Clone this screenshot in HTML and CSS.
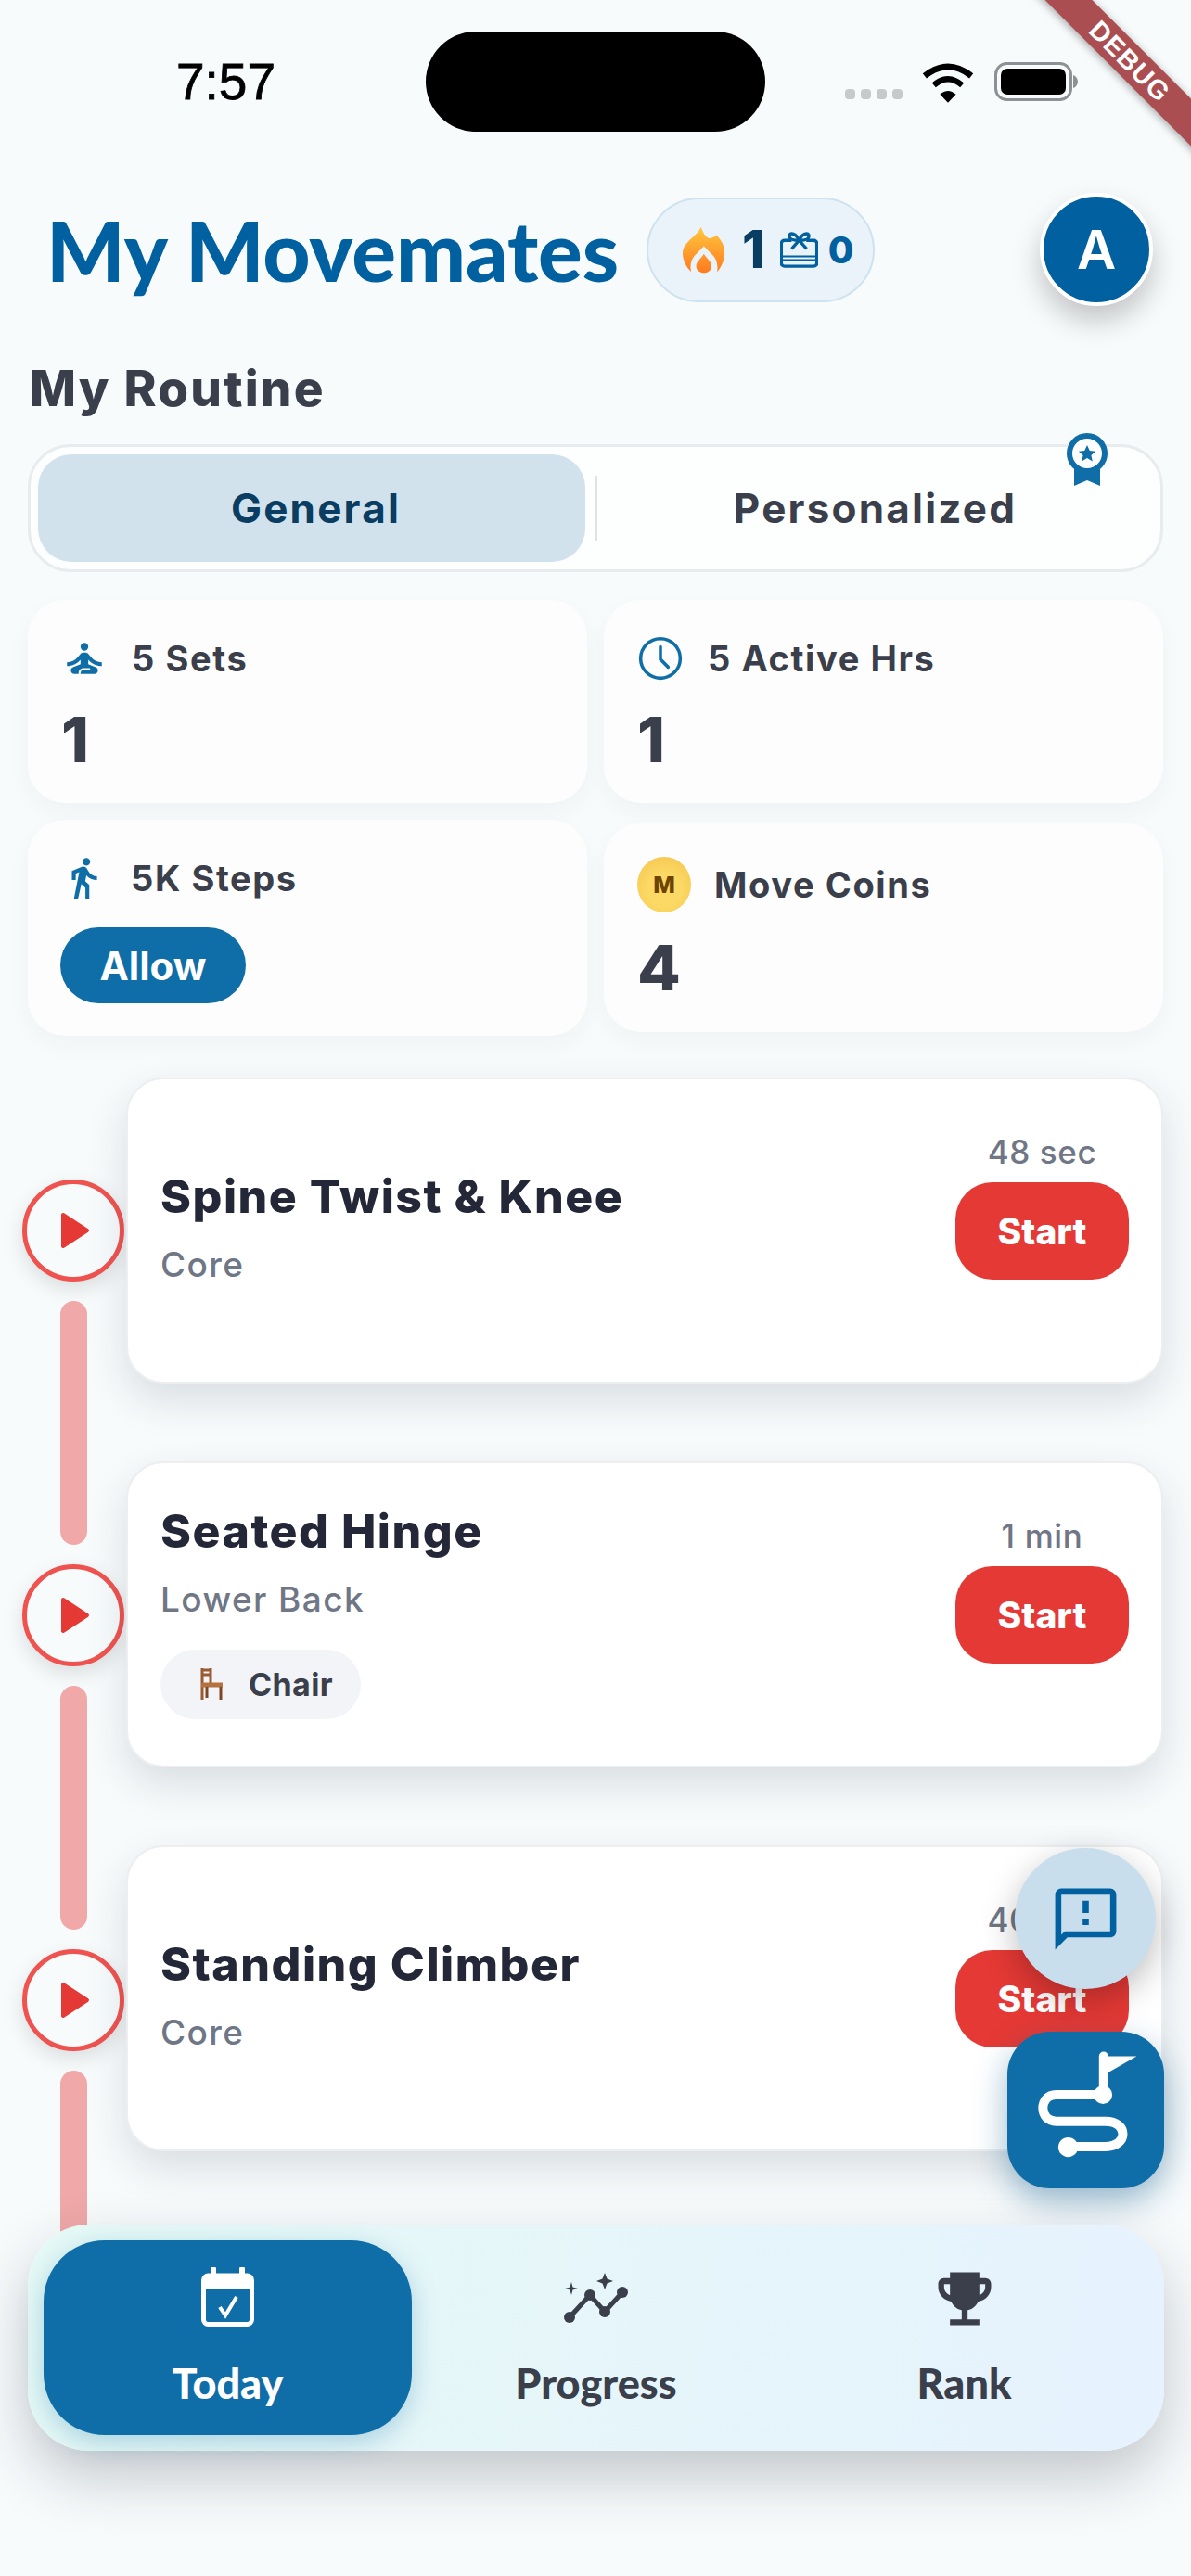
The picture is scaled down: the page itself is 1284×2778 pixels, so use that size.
FILE: index.html
```html
<!DOCTYPE html>
<html lang="en">
<head>
    <meta charset="UTF-8">
    <meta name="viewport" content="width=device-width, initial-scale=1.0">
    <title>My Movemates</title>
    <link rel="stylesheet" href="styles.css">
</head>
<body>
<div class="screen">
    <div class="status-bar">
        <div class="clock">7:57</div>
        <div class="island"></div>
        <div class="status-icons">
            <div class="signal"><span></span><span></span><span></span><span></span></div>
            <svg class="wifi" viewBox="350 190 168 136"><path d="M434 325L408 298Q434 275 460 298Z" fill="#000"/><path d="M388 268Q434 228 480 268" fill="none" stroke="#000" stroke-width="19"/><path d="M358 238Q434 178 510 238" fill="none" stroke="#000" stroke-width="20"/></svg>
            <svg class="battery" viewBox="0 0 91 42"><rect x="1.5" y="1.5" width="81" height="39" rx="12" fill="none" stroke="#8e9193" stroke-width="3"/><rect x="7" y="7" width="70" height="28" rx="7" fill="#000"/><path d="M85 14c3 1 5 4 5 7s-2 6-5 7z" fill="#8e9193"/></svg>
        </div>
    </div>

    <header class="app-header">
        <h1 class="app-title">My Movemates</h1>
        <div class="streak-badge">
            <svg class="flame" viewBox="160 150 140 157">
                <defs><linearGradient id="flameFill" gradientUnits="userSpaceOnUse" x1="0" y1="155" x2="0" y2="305"><stop offset="0" stop-color="#ffc83f"/><stop offset="1" stop-color="#ff7a1f"/></linearGradient></defs>
                <path fill="url(#flameFill)" d="M222 155C228 175 240 195 252 192C262 190 268 186 272 182C290 200 300 220 298 245C297 265 288 285 274 302C278 280 272 262 262 250L231 218L200 250C190 262 184 282 190 302C172 285 162 262 162 240C162 205 205 190 222 155Z"/>
                <path fill="url(#flameFill)" d="M231 243C240 258 256 268 256 283C256 296 244 305 231 305C218 305 206 296 206 283C206 268 222 258 231 243Z"/>
            </svg>
            <span class="streak-count">1</span>
            <svg class="gift" viewBox="488 175 122 118" fill="none" stroke="#0060a0" stroke-width="10">
                <path d="M525 205H502a10 10 0 0 0-10 10v63a10 10 0 0 0 10 10h94a10 10 0 0 0 10-10v-63a10 10 0 0 0-10-10H572"/>
                <path d="M525 232L549 205L573 232"/>
                <path d="M549 205C535 175 510 180 520 198C524 204 540 205 549 205C563 175 588 180 578 198C574 204 558 205 549 205"/>
                <path d="M492 256H606M492 268H606" stroke-width="6"/>
            </svg>
            <span class="gift-count">0</span>
        </div>
        <div class="avatar">A</div>
    </header>

    <main class="content">
        <h2 class="section-title">My Routine</h2>

        <div class="segment">
            <div class="segment-tab selected">General</div>
            <div class="segment-divider"></div>
            <div class="segment-tab">Personalized</div>
            <svg class="medal" viewBox="0 0 44 57">
                <path d="M8 32V57L22 51L36 57V32Z" fill="#0f6ea8"/>
                <circle cx="22" cy="22" r="19" fill="#fff" stroke="#0f6ea8" stroke-width="6"/>
                <path d="M22 13l2.8 6 6.4.7-4.8 4.3 1.4 6.4-5.8-3.3-5.8 3.3 1.4-6.4-4.8-4.3 6.4-.7z" fill="#0f6ea8"/>
            </svg>
        </div>

        <div class="stats">
            <div class="stat-card">
                <div class="stat-head">
                    <svg class="stat-icon" viewBox="0 0 24 24" fill="#0f6ea8"><circle cx="12" cy="6" r="2"/><path d="M21 16v-2c-2.24 0-4.16-.96-5.6-2.68l-1.34-1.6c-.38-.46-.94-.72-1.53-.72h-1.05c-.59 0-1.15.26-1.53.72l-1.34 1.6C7.16 13.04 5.24 14 3 14v2c2.77 0 5.19-1.17 7-3.25V15l-3.88 1.55c-.67.27-1.12.93-1.12 1.66C5 19.2 5.8 20 6.79 20H9v-.5c0-1.38 1.12-2.5 2.5-2.5h3c.28 0 .5.22.5.5s-.22.5-.5.5h-3c-.83 0-1.5.67-1.5 1.5v.5h7.21c.99 0 1.79-.8 1.79-1.79 0-.73-.45-1.39-1.12-1.66L14 15v-2.25c1.81 2.08 4.23 3.25 7 3.25z"/></svg>
                    <span class="stat-label">5 Sets</span>
                </div>
                <div class="stat-value">1</div>
            </div>
            <div class="stat-card">
                <div class="stat-head">
                    <svg class="stat-icon" viewBox="0 0 48 48" fill="none" stroke="#0f6ea8" stroke-width="3.4" stroke-linecap="round"><circle cx="24" cy="24" r="20.5"/><path d="M24 12v13l8 8"/></svg>
                    <span class="stat-label">5 Active Hrs</span>
                </div>
                <div class="stat-value">1</div>
            </div>
            <div class="stat-card">
                <div class="stat-head">
                    <svg class="stat-icon" viewBox="0 0 24 24" fill="#0f6ea8"><path d="M13.5 5.5c1.1 0 2-.9 2-2s-.9-2-2-2-2 .9-2 2 .9 2 2 2zM9.8 8.9L7 23h2.1l1.8-8 2.1 2v6h2v-7.5l-2.1-2 .6-3C14.8 12 16.8 13 19 13v-2c-1.9 0-3.5-1-4.3-2.4l-1-1.6c-.4-.6-1-1-1.7-1-.3 0-.5.1-.8.1L6 8.3V13h2V9.6l1.8-.7"/></svg>
                    <span class="stat-label">5K Steps</span>
                </div>
                <button class="allow-button">Allow</button>
            </div>
            <div class="stat-card coins">
                <div class="stat-head">
                    <div class="coin">M</div>
                    <span class="stat-label">Move Coins</span>
                </div>
                <div class="stat-value">4</div>
            </div>
        </div>

        <section class="routine">
            <div class="timeline">
                <div class="play-node"><svg class="play-arrow" viewBox="0 0 32 40"><path d="M3 3L29 20L3 37Z" fill="#e53935" stroke="#e53935" stroke-width="4" stroke-linejoin="round"/></svg></div>
                <div class="timeline-bar"></div>
                <div class="play-node"><svg class="play-arrow" viewBox="0 0 32 40"><path d="M3 3L29 20L3 37Z" fill="#e53935" stroke="#e53935" stroke-width="4" stroke-linejoin="round"/></svg></div>
                <div class="timeline-bar"></div>
                <div class="play-node"><svg class="play-arrow" viewBox="0 0 32 40"><path d="M3 3L29 20L3 37Z" fill="#e53935" stroke="#e53935" stroke-width="4" stroke-linejoin="round"/></svg></div>
                <div class="timeline-bar"></div>
            </div>
            <div class="exercises">
                <div class="exercise-card">
                    <div class="exercise-info">
                        <div class="exercise-name">Spine Twist &amp; Knee</div>
                        <div class="exercise-area">Core</div>
                    </div>
                    <div class="exercise-action">
                        <div class="exercise-time">48 sec</div>
                        <button class="start-button">Start</button>
                    </div>
                </div>
                <div class="exercise-card">
                    <div class="exercise-info">
                        <div class="exercise-name">Seated Hinge</div>
                        <div class="exercise-area">Lower Back</div>
                        <div class="equipment-chip">
                            <svg class="chair" viewBox="0 0 28 36" fill="none" stroke="#9a5b32" stroke-width="3"><path d="M4 1V35M13 1V18M4 3H13M4 8H13" /><path d="M3 19H26" stroke="#b5713f" stroke-width="5"/><path d="M9 21V33M24 21V35" stroke="#7d4726"/></svg>
                            <span>Chair</span>
                        </div>
                    </div>
                    <div class="exercise-action">
                        <div class="exercise-time">1 min</div>
                        <button class="start-button">Start</button>
                    </div>
                </div>
                <div class="exercise-card">
                    <div class="exercise-info">
                        <div class="exercise-name">Standing Climber</div>
                        <div class="exercise-area">Core</div>
                    </div>
                    <div class="exercise-action">
                        <div class="exercise-time">40 sec</div>
                        <button class="start-button">Start</button>
                    </div>
                </div>
            </div>
        </section>
    </main>

    <button class="fab-feedback">
        <svg viewBox="0 0 24 24" fill="#0060a0"><path d="M20 2H4c-1.1 0-2 .9-2 2v18l4-4h14c1.1 0 2-.9 2-2V4c0-1.1-.9-2-2-2zm0 14H5.17L4 17.17V4h16v12zM11 12h2v2h-2zm0-6h2v4h-2z"/></svg>
    </button>
    <button class="fab-route">
        <svg viewBox="137 693 508 507">
            <path d="M449 772V897H295C238 897 238 983 295 983H455C530 983 530 1065 455 1065H335" fill="none" stroke="#fff" stroke-width="30" stroke-linecap="round"/>
            <path d="M460 772L556 772L460 827Z" fill="#fff"/>
            <circle cx="447" cy="897" r="30" fill="#fff"/>
            <circle cx="334" cy="1067" r="32" fill="#fff"/>
        </svg>
    </button>

    <nav class="bottom-nav">
        <div class="nav-item active">
            <svg class="nav-icon" viewBox="0 0 57 64"><path d="M13 2V12M44 2V12" stroke="#fff" stroke-width="6" stroke-linecap="round"/><rect x="2.5" y="9" width="52" height="52.500" rx="5" fill="none" stroke="#fff" stroke-width="5"/><rect x="2.5" y="9" width="52" height="14" fill="#fff"/><path d="M20 43L26 52L38 32" fill="none" stroke="#fff" stroke-width="4"/></svg>
            <span class="nav-label">Today</span>
        </div>
        <div class="nav-item">
            <svg class="nav-icon progress" viewBox="0 0 70 54" fill="#3a3f4b"><path d="M6 48L28 24L44 42L63 21" fill="none" stroke="#3a3f4b" stroke-width="5"/><circle cx="6" cy="48" r="6"/><circle cx="28" cy="24" r="6"/><circle cx="44" cy="42" r="6"/><circle cx="63" cy="21" r="6"/><path d="M44 0L46.5 6.5L53 9L46.5 11.5L44 18L41.500 11.500L35 9L41.500 6.500Z"/><path d="M8 10L9.500 15.500L15 17L9.500 18.500L8 24L6.500 18.500L1 17L6.500 15.500Z"/></svg>
            <span class="nav-label">Progress</span>
        </div>
        <div class="nav-item">
            <svg class="nav-icon trophy" viewBox="0 0 24 24" fill="#3a3f4b"><path d="M19 5h-2V3H7v2H5c-1.100 0-2 .9-2 2v1c0 2.550 1.920 4.630 4.390 4.940.63 1.500 1.980 2.630 3.610 2.960V19H7v2h10v-2h-4v-3.100c1.630-.33 2.980-1.460 3.610-2.960C19.080 12.630 21 10.550 21 8V7c0-1.100-.9-2-2-2zM5 8V7h2v3.820C5.840 10.400 5 9.300 5 8zm14 0c0 1.300-.84 2.400-2 2.820V7h2v1z"/></svg>
            <span class="nav-label">Rank</span>
        </div>
    </nav>

    <div class="debug-banner">DEBUG</div>
</div>
</body>
</html>
```

FILE: styles.css
```css
* {
    box-sizing: border-box;
}
body {
    margin: 0;
    font-family: "Inter", "Liberation Sans", sans-serif;
    background-color: #f8fbfc;
}
button {
    border: none;
    font-family: inherit;
    padding: 0;
}
.screen {
    position: relative;
    width: 1284px;
    height: 2778px;
    overflow: hidden;
    background-color: #f8fbfc;
}

/* status bar */
.status-bar {
    display: flex;
    align-items: center;
    height: 176px;
}
.clock {
    width: 459px;
    padding-left: 190px;
    font-family: "Liberation Sans", sans-serif;
    font-size: 55px;
    color: #000;
    -webkit-text-stroke: 0.8px #000;
}
.island {
    width: 366px;
    height: 108px;
    background-color: #000;
    border-radius: 54px;
}
.status-icons {
    display: flex;
    align-items: center;
    margin-left: 86px;
}
.signal {
    display: flex;
    gap: 6px;
    margin-top: 26px;
    margin-right: 21px;
}
.signal span {
    width: 11px;
    height: 11px;
    border-radius: 4px;
    background-color: #c6cacb;
}
.wifi {
    width: 56px;
    height: 45px;
    margin-right: 22px;
}
.battery {
    width: 91px;
    height: 42px;
}

/* header */
.app-header {
    display: flex;
    align-items: center;
    height: 186px;
    padding-left: 50px;
}
.app-title {
    margin: 0;
    width: 647px;
    font-family: "Lato", sans-serif;
    font-weight: 900;
    font-size: 89px;
    color: #0060a0;
    white-space: nowrap;
}
.streak-badge {
    display: flex;
    align-items: center;
    width: 246px;
    height: 113px;
    padding-left: 36px;
    background-color: #eaf3f9;
    border: 2px solid #cfe2ef;
    border-radius: 57px;
}
.flame {
    width: 47px;
    height: 52px;
}
.streak-count {
    margin-left: 18px;
    font-size: 56px;
    font-weight: 800;
    color: #0a3d62;
}
.gift {
    width: 41px;
    height: 40px;
    margin-left: 16px;
}
.gift-count {
    margin-left: 11px;
    font-size: 40px;
    font-weight: 800;
    color: #0060a0;
}
.avatar {
    display: flex;
    align-items: center;
    justify-content: center;
    width: 122px;
    height: 122px;
    margin-left: 178px;
    border: 4px solid #fff;
    border-radius: 50%;
    background-color: #0060a0;
    color: #fff;
    font-size: 58px;
    font-weight: 600;
    box-shadow: 0 16px 30px rgba(0,0,0,0.22);
}

/* routine */
.section-title {
    margin: 0 0 35px 32px;
    padding-top: 32px;
    line-height: 50px;
    font-size: 53px;
    font-weight: 800;
    letter-spacing: 2.2px;
    color: #3a3f4b;
}
.segment {
    position: relative;
    display: flex;
    align-items: center;
    width: 1224px;
    height: 138px;
    margin-left: 30px;
    padding: 0 8px;
    background-color: #fdfefe;
    border: 3px solid #e8ecee;
    border-radius: 46px;
}
.segment-tab {
    flex: 1;
    display: flex;
    align-items: center;
    justify-content: center;
    height: 116px;
    font-size: 44px;
    font-weight: 700;
    letter-spacing: 2.2px;
    color: #3a3f4b;
    border-radius: 36px;
}
.segment-tab.selected {
    flex: none;
    width: 590px;
    padding-left: 9px;
    background-color: #d1e2ed;
    color: #0a3d62;
}
.segment-divider {
    width: 2px;
    height: 70px;
    margin-left: 11px;
    background-color: #dfe3e5;
}
.medal {
    position: absolute;
    top: -15px;
    right: 57px;
    width: 44px;
    height: 57px;
}
.stats {
    display: grid;
    grid-template-columns: 603px 603px;
    gap: 18px;
    align-items: center;
    margin: 30px 0 45px 30px;
}
.stat-card {
    height: 219px;
    padding: 38px 36px 0;
    background-color: #fdfdfd;
    border-radius: 40px;
    box-shadow: 0 10px 24px rgba(30,50,60,0.04);
}
.stat-card:nth-child(3) {
    height: 233px;
    padding-left: 35px;
}
.stat-card.coins {
    height: 225px;
    padding-top: 36px;
}
.stat-head {
    display: flex;
    align-items: center;
    height: 50px;
}
.stat-card.coins .stat-head {
    height: 60px;
}
.stat-icon {
    width: 50px;
    height: 50px;
    margin-right: 26px;
}
.stat-label {
    font-size: 38px;
    font-weight: 700;
    letter-spacing: 1.6px;
    color: #3a3f4b;
}
.stat-value {
    margin-top: 27px;
    line-height: 70px;
    font-size: 68px;
    font-weight: 800;
    color: #3a3f4b;
}
.stat-card.coins .stat-value {
    margin-top: 24px;
}
.coin {
    display: flex;
    align-items: center;
    justify-content: center;
    width: 58px;
    height: 60px;
    margin-right: 25px;
    border-radius: 50%;
    background: radial-gradient(circle at 50% 60%, #fbd964 40%, #f3c24b 100%);
    color: #6e4300;
    font-size: 25px;
    font-weight: 800;
}
.allow-button {
    display: block;
    width: 200px;
    height: 82px;
    margin-top: 28px;
    border-radius: 41px;
    background-color: #0f6ea8;
    color: #fff;
    font-size: 42px;
    font-weight: 700;
}

.routine {
    display: flex;
    padding-left: 24px;
}
.timeline {
    display: flex;
    flex-direction: column;
    align-items: center;
    flex: none;
    width: 110px;
    padding-top: 110px;
    margin-right: 3px;
}
.play-node {
    display: flex;
    align-items: center;
    justify-content: center;
    flex: none;
    width: 110px;
    height: 110px;
    border: 5px solid #ef5350;
    border-radius: 50%;
    background-color: #f7fbfc;
    box-shadow: 0 8px 22px rgba(0,0,0,0.12);
}
.play-arrow {
    width: 32px;
    height: 40px;
    margin-left: 4px;
}
.timeline-bar {
    flex: none;
    width: 29px;
    height: 263px;
    margin: 21px 0;
    border-radius: 15px;
    background-color: #f0a8a8;
}
.exercises {
    display: flex;
    flex-direction: column;
    gap: 84px;
    margin-left: -1px;
}
.exercise-card {
    display: flex;
    width: 1118px;
    height: 330px;
    padding: 0 35px 0 35px;
    background-color: #fff;
    border: 2px solid #eceef0;
    border-radius: 40px;
    box-shadow: 0 18px 44px rgba(30,45,55,0.14);
}
.exercise-info {
    flex: 1;
    display: flex;
    flex-direction: column;
    justify-content: center;
    align-items: flex-start;
    padding-bottom: 6px;
}
.exercise-name {
    line-height: 56px;
    font-size: 50px;
    font-weight: 800;
    letter-spacing: 1.5px;
    color: #232737;
}
.exercise-area {
    margin-top: 24px;
    line-height: 44px;
    font-size: 37px;
    font-weight: 500;
    letter-spacing: 1.4px;
    color: #6f7685;
}
.equipment-chip {
    display: flex;
    align-items: center;
    height: 75px;
    margin-top: 32px;
    padding: 0 30px 0 41px;
    border-radius: 38px;
    background-color: #f3f4f7;
    font-size: 34px;
    font-weight: 700;
    letter-spacing: 0.4px;
    color: #3a3f4b;
}
.chair {
    width: 28px;
    height: 36px;
    margin-right: 26px;
}
.exercise-action {
    display: flex;
    flex-direction: column;
    align-items: center;
    flex: none;
    width: 187px;
    padding-top: 58px;
}
.exercise-time {
    line-height: 40px;
    font-size: 35px;
    font-weight: 500;
    letter-spacing: 0.6px;
    color: #6f7685;
    white-space: nowrap;
}
.start-button {
    width: 187px;
    height: 105px;
    margin-top: 13px;
    border-radius: 40px;
    background-color: #e53935;
    color: #fff;
    font-size: 39px;
    font-weight: 800;
}

/* floating buttons */
.fab-feedback {
    position: absolute;
    left: 1094px;
    top: 1993px;
    display: flex;
    align-items: center;
    justify-content: center;
    width: 152px;
    height: 152px;
    border-radius: 50%;
    background-color: #c8deed;
    box-shadow: 0 12px 36px rgba(0,0,0,0.26);
}
.fab-feedback svg {
    width: 79px;
    height: 79px;
}
.fab-route {
    position: absolute;
    left: 1086px;
    top: 2191px;
    width: 169px;
    height: 169px;
    border-radius: 46px;
    background-color: #0f6ea8;
    box-shadow: 0 14px 36px rgba(15,90,140,0.42);
}
.fab-route svg {
    display: block;
    width: 169px;
    height: 169px;
}

/* bottom navigation */
.bottom-nav {
    position: absolute;
    left: 30px;
    top: 2399px;
    display: flex;
    width: 1225px;
    height: 244px;
    padding: 17px;
    border-radius: 66px;
    background: linear-gradient(100deg, #e5f9f5, #e6f2fe);
    box-shadow: 0 28px 64px rgba(20,35,45,0.24);
}
.nav-item {
    display: flex;
    flex-direction: column;
    align-items: center;
    width: 397px;
    height: 210px;
    padding-top: 25px;
    border-radius: 66px;
}
.nav-item.active {
    background-color: #0f6ea8;
    box-shadow: 0 8px 28px rgba(15,110,168,0.28);
}
.nav-icon {
    height: 64px;
    margin: 4px 0 8px;
}
.nav-icon.progress {
    height: 54px;
    margin: 10px 0 12px;
}
.nav-icon.trophy {
    height: 76px;
    margin: 0;
}
.nav-label {
    margin-top: 23px;
    line-height: 60px;
    font-family: "Lato", sans-serif;
    font-size: 45px;
    font-weight: 900;
    color: #3a3f4b;
}
.nav-item.active .nav-label {
    color: #fff;
}

.debug-banner {
    position: absolute;
    left: 1068px;
    top: 48px;
    width: 300px;
    height: 36px;
    line-height: 36px;
    text-align: center;
    transform: rotate(45deg);
    background-color: #ab4e51;
    box-shadow: 0 2px 10px rgba(0,0,0,0.35);
    color: #fff;
    font-family: "Liberation Sans", sans-serif;
    font-size: 29px;
    font-weight: 700;
    letter-spacing: 1px;
}
```
